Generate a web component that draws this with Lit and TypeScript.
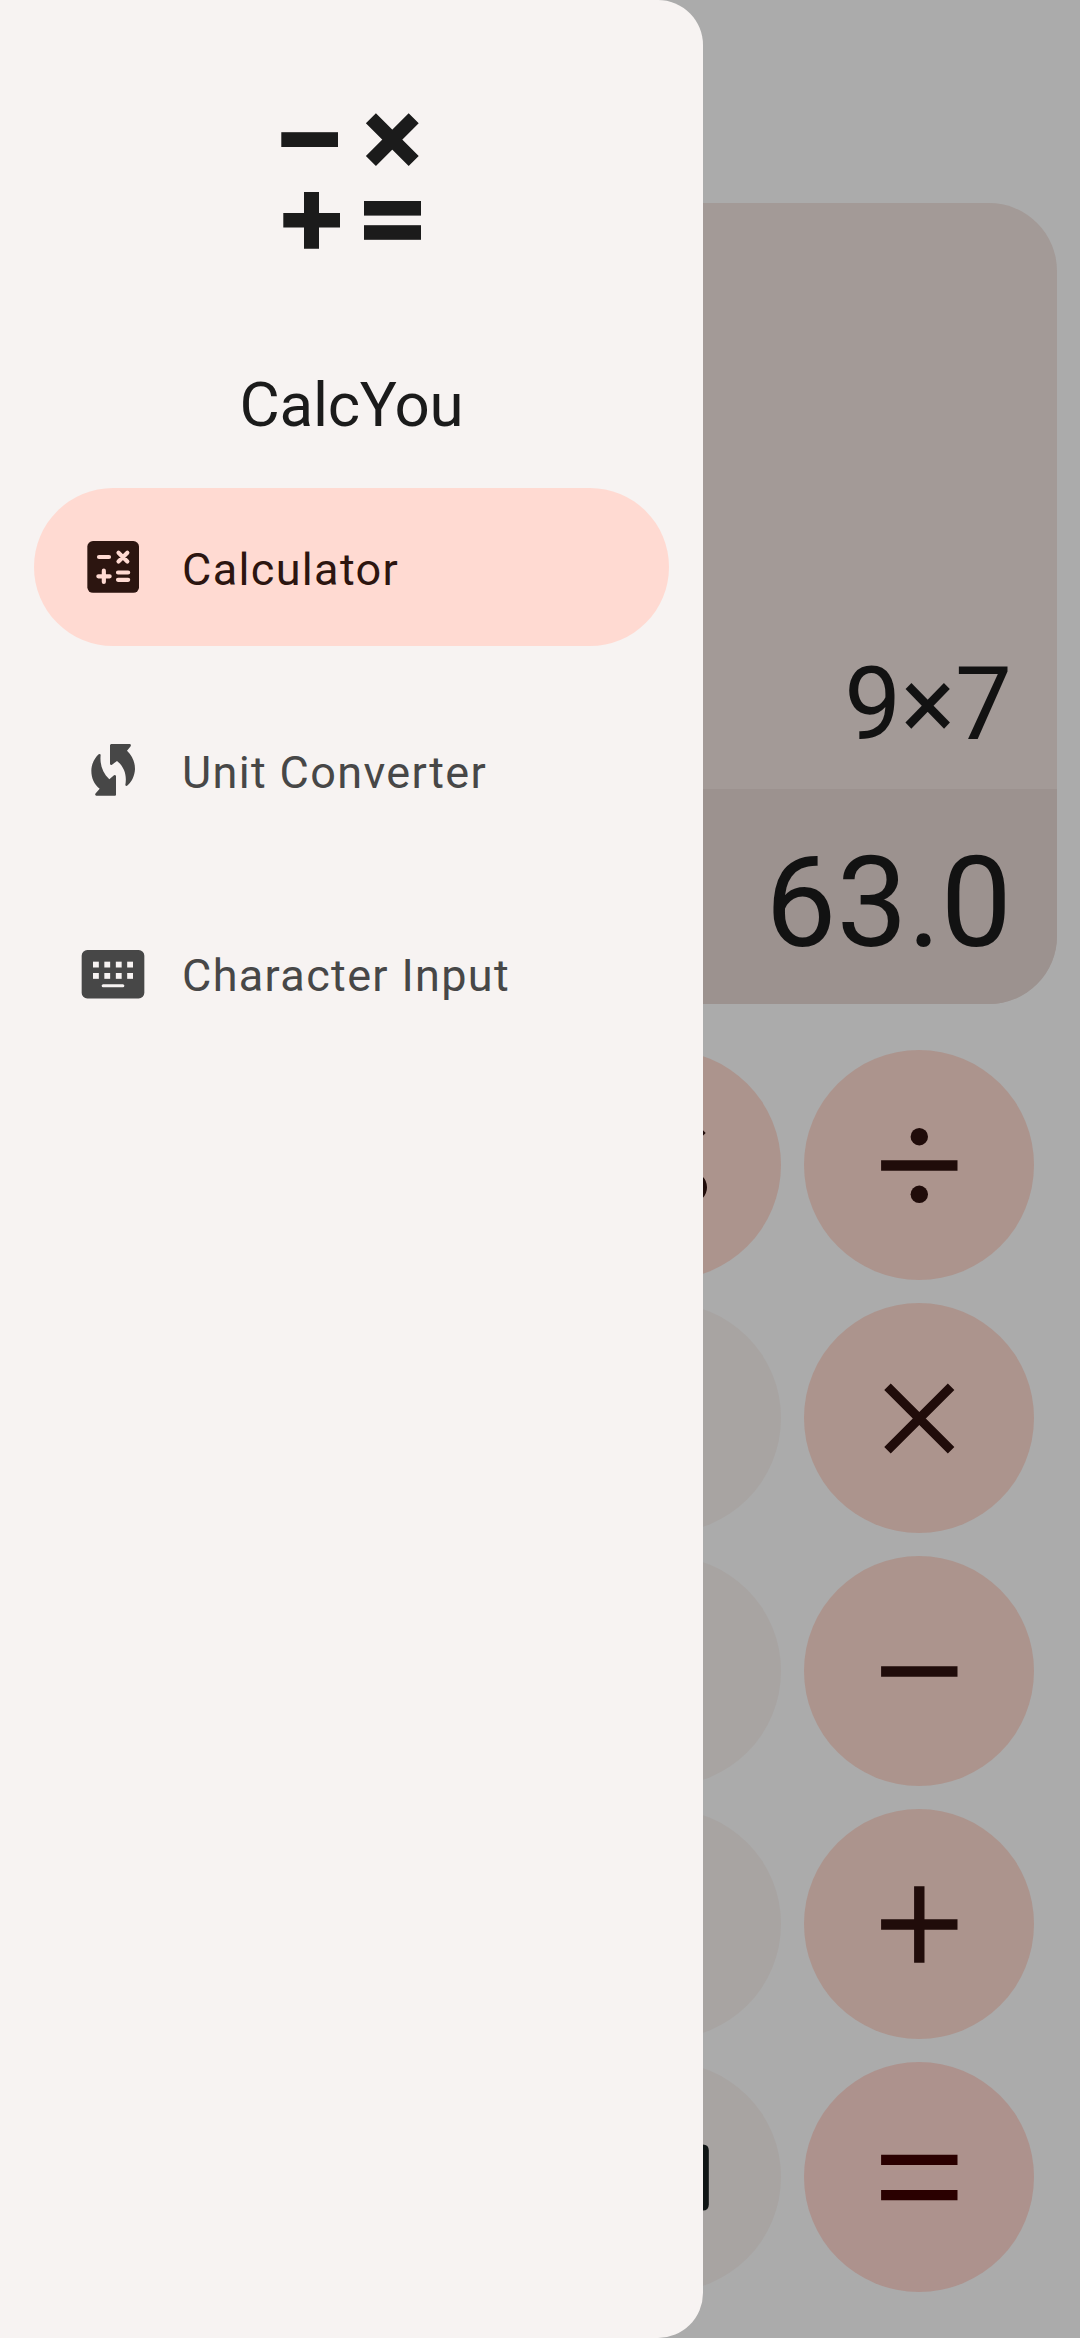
import { LitElement, html, css, svg, nothing } from "lit";
import { customElement, property } from "lit/decorators.js";

type IconName =
  | "calculate" | "convert" | "keyboard"
  | "percent" | "divide" | "times" | "minus" | "plus" | "equals" | "backspace";

const KEY_BOX = "-50.300 -50.500 100 100";

const icons: Record<IconName, { box: string; art: unknown }> = {
  calculate: {
    box: "177 189 204 204",
    art: svg`
      <rect x="202" y="213" width="155" height="155.500" rx="17" fill="currentColor"/>
      <g stroke="var(--cut)" stroke-width="12.500" stroke-linecap="round" fill="none">
        <path d="M237 261H267M295.500 248L322 274.500M322 248L295.500 274.500"/>
        <path d="M235 319H269M251.500 302V336M294 307.500H324.500M294 329.500H324.500"/>
      </g>`,
  },
  convert: {
    box: "27 48 204 204",
    art: svg`<path fill="currentColor" d="M123 72H180Q184 74 182 79L171 92C187 107 195 126 195 147C194 167 186 184 173 196Q168 200 166 195C171 168 164 141 141 123L126 134Q122 136 120 132V75ZM92 104C89 133 97 158 118 178L132 166Q136 164 138 168V224Q138 227 135 227H79Q74 226 76 221L89 206C72 192 64 174 64 152C64 133 73 115 86 103Q90 100 92 104Z"/>`,
  },
  keyboard: {
    box: "27 657 204 204",
    art: svg`
      <rect x="35" y="690" width="188" height="145.500" rx="17" fill="currentColor"/>
      <g fill="var(--cut)">
        ${[69, 103, 137.5, 171.5].map((x) => svg`
          <rect x=${x} y="725" width="17.500" height="17.500"/>
          <rect x=${x} y="759" width="17.500" height="17.500"/>`)}
        <rect x="95" y="793" width="68" height="9" rx="4.500"/>
      </g>`,
  },
  percent: {
    box: KEY_BOX,
    art: svg`<path fill="currentColor" d="M39.400-32.500L33.700-38.200L-39.400 32.500L-33.700 38.200Z"/>
      <g fill="none" stroke="currentColor" stroke-width="8">
        <circle cx="24.900" cy="21.800" r="11.800"/><circle cx="-24.900" cy="-21.800" r="11.800"/>
      </g>`,
  },
  divide: {
    box: KEY_BOX,
    art: svg`<path fill="currentColor" d="M-38.200-5.200H38.200V5.200H-38.200Z"/>
      <circle cy="-28.800" r="8.700" fill="currentColor"/><circle cy="28.800" r="8.700" fill="currentColor"/>`,
  },
  times: {
    box: KEY_BOX,
    art: svg`<path stroke="currentColor" stroke-width="9.200" d="M-31.800-31.800L31.800 31.800M31.800-31.800L-31.800 31.800"/>`,
  },
  minus: {
    box: KEY_BOX,
    art: svg`<path fill="currentColor" d="M-38.200-5.200H38.200V5.200H-38.200Z"/>`,
  },
  plus: {
    box: KEY_BOX,
    art: svg`<path stroke="currentColor" stroke-width="10.400" d="M-38.200 0H38.200M0-38.200V38.200"/>`,
  },
  equals: {
    box: KEY_BOX,
    art: svg`<path stroke="currentColor" stroke-width="10.200" d="M-38.200-17.600H38.200M-38.200 17.600H38.200"/>`,
  },
  backspace: {
    box: KEY_BOX,
    art: svg`<path fill="currentColor" d="M-20-33H36.500Q42.500-33 42.500-27V27Q42.500 33 36.500 33H-20L-44 0Z"/>`,
  },
};

@customElement("calc-icon")
class CalcIcon extends LitElement {
  @property() name: IconName = "plus";
  static styles = css`
    :host { display: block; }
    svg { display: block; width: 100%; height: 100%; }
  `;
  render() {
    const icon = icons[this.name];
    return html`<svg viewBox=${icon.box}>${icon.art}</svg>`;
  }
}

@customElement("nav-item")
class NavItem extends LitElement {
  @property() icon: IconName = "calculate";
  @property() label = "";
  @property({ type: Boolean, reflect: true }) active = false;
  static styles = css`
    :host {
      --cut: #f7f3f2;
      display: flex;
      align-items: center;
      gap: 35px;
      height: 158px;
      padding: 0 45px;
      border-radius: 79px;
      box-sizing: border-box;
      color: #474747;
    }
    :host([active]) {
      --cut: #ffdad2;
      background: #ffdad2;
      color: #2c1510;
    }
    .icon { width: 68px; height: 68px; }
    .label {
      font-size: 45px;
      line-height: 68px;
      letter-spacing: 1.350px;
      white-space: nowrap;
      padding-top: 6px;
    }
  `;
  render() {
    return html`
      <calc-icon class="icon" .name=${this.icon}></calc-icon>
      <span class="label">${this.label}</span>`;
  }
}

@customElement("calc-key")
class CalcKey extends LitElement {
  @property() icon?: IconName;
  @property({ reflect: true }) tone = "operator";
  static styles = css`
    :host {
      display: flex;
      align-items: center;
      justify-content: center;
      width: 230px;
      height: 230px;
      border-radius: 50%;
      background: #ac948d;
      color: #200c0a;
    }
    :host([tone="number"]) { background: #a8a4a2; color: #101515; }
    :host([tone="result"]) { background: #ad928d; color: #2a0000; }
    .icon { width: 100px; height: 100px; }
  `;
  render() {
    return this.icon
      ? html`<calc-icon class="icon" .name=${this.icon}></calc-icon>`
      : nothing;
  }
}

@customElement("app-root")
class AppRoot extends LitElement {
  static styles = css`
    :host {
      display: block;
      position: relative;
      width: 1080px;
      height: 2338px;
      overflow: hidden;
      background: #ababab;
      font-family: Roboto, "Liberation Sans", sans-serif;
    }
    .calculator {
      display: flex;
      flex-direction: column;
      height: 100%;
      box-sizing: border-box;
      padding: 203px 23px 46px;
      gap: 46px;
    }
    .display {
      display: flex;
      flex-direction: column;
      height: 801px;
      border-radius: 68px;
      overflow: hidden;
      background: #a39a97;
      color: #121212;
      text-align: right;
    }
    .expression {
      flex: 1;
      display: flex;
      align-items: flex-end;
      justify-content: flex-end;
      padding: 0 45px 25px;
      font-size: 101.250px;
      line-height: 118px;
    }
    .result {
      height: 215px;
      box-sizing: border-box;
      padding: 40px 45px 0;
      background: #9c928f;
      font-size: 126.560px;
      line-height: 148px;
    }
    .keys {
      display: grid;
      grid-template-columns: 230px 230px;
      gap: 23px;
      justify-content: end;
      padding-right: 23px;
    }
    .drawer {
      position: absolute;
      inset: 0 auto 0 0;
      width: 703px;
      box-sizing: border-box;
      padding: 0 34px;
      display: flex;
      flex-direction: column;
      border-radius: 0 45px 45px 0;
      background: #f7f3f2;
    }
    .brand {
      display: flex;
      flex-direction: column;
      align-items: center;
      height: 488px;
      box-sizing: border-box;
      padding-top: 90px;
      color: #1b1b1b;
    }
    .logo { display: block; width: 183px; height: 182px; }
    .title {
      margin: 94px 0 0;
      font-size: 61.875px;
      letter-spacing: -0.300px;
      line-height: 78px;
      font-weight: 400;
    }
    .nav { display: flex; flex-direction: column; gap: 45px; }
  `;

  render() {
    return html`
      <main class="calculator">
        <section class="display">
          <div class="expression">9×7</div>
          <div class="result">63.0</div>
        </section>
        <section class="keys">
          <calc-key icon="percent"></calc-key>
          <calc-key icon="divide"></calc-key>
          <calc-key tone="number"></calc-key>
          <calc-key icon="times"></calc-key>
          <calc-key tone="number"></calc-key>
          <calc-key icon="minus"></calc-key>
          <calc-key tone="number"></calc-key>
          <calc-key icon="plus"></calc-key>
          <calc-key tone="number" icon="backspace"></calc-key>
          <calc-key tone="result" icon="equals"></calc-key>
        </section>
      </main>
      <aside class="drawer">
        <header class="brand">
          <svg class="logo" viewBox="260 90 183 182" fill="currentColor">
            <rect x="281.300" y="132.200" width="56.700" height="14.800"/>
            <path stroke="currentColor" stroke-width="14.200"
              d="M370.900 118.300L413.700 161.100M413.700 118.300L370.900 161.100"/>
            <path d="M283.300 213H304V192H319V213H340V227.500H319V248.800H304V227.500H283.300Z"/>
            <rect x="364" y="201" width="57" height="14.600"/>
            <rect x="364" y="225.200" width="57" height="14.600"/>
          </svg>
          <h1 class="title">CalcYou</h1>
        </header>
        <nav class="nav">
          <nav-item active icon="calculate" label="Calculator"></nav-item>
          <nav-item icon="convert" label="Unit Converter"></nav-item>
          <nav-item icon="keyboard" label="Character Input"></nav-item>
        </nav>
      </aside>`;
  }
}
